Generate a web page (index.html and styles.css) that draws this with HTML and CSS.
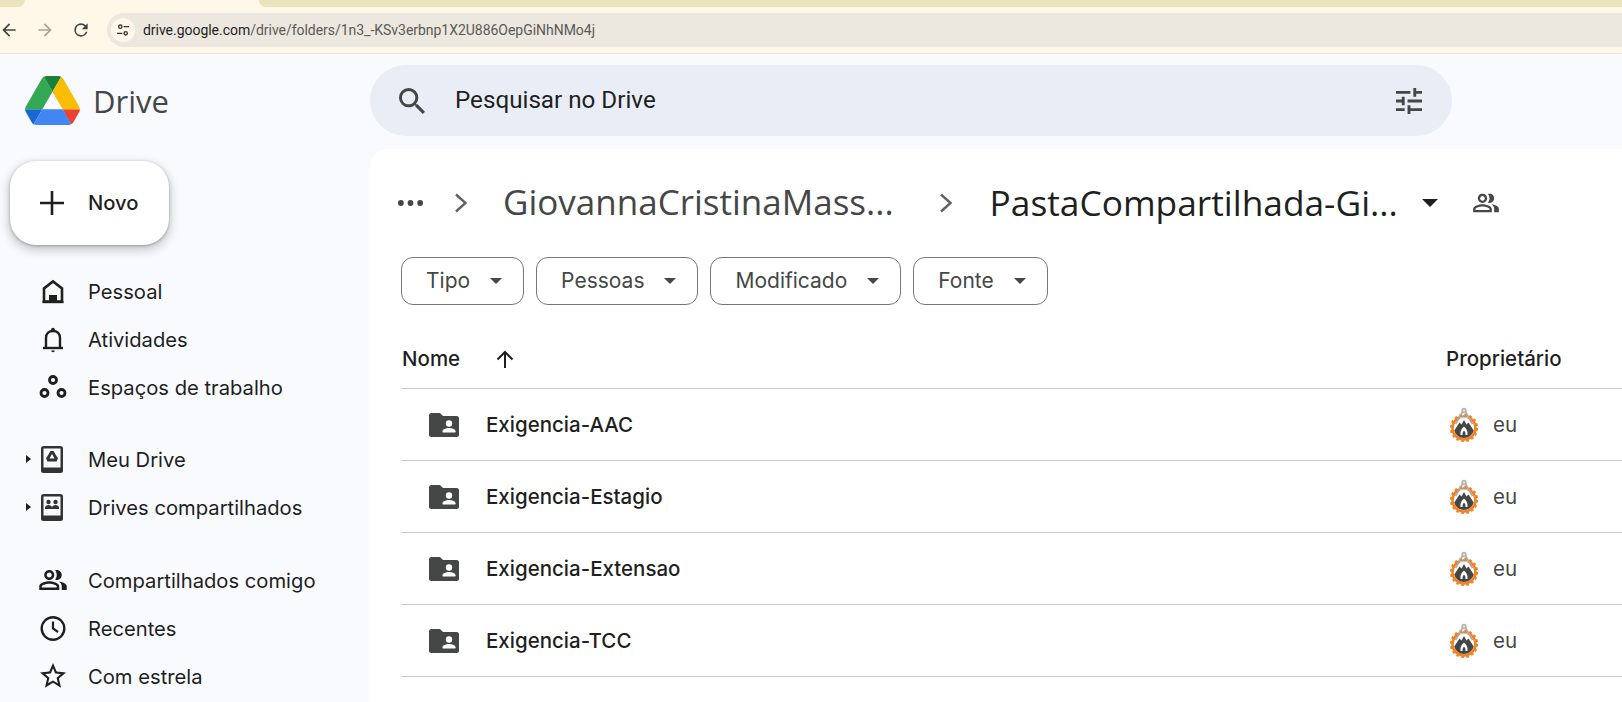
FILE: index.html
```html
<!DOCTYPE html>
<html lang="pt-BR">
<head>
<meta charset="utf-8">
<title>PastaCompartilhada - Google Drive</title>
<link rel="stylesheet" href="styles.css">
</head>
<body>
<svg class="defs" width="0" height="0" aria-hidden="true">
  <symbol id="people" viewBox="0 0 24 24">
    <path d="M16.67 13.13C18.04 14.06 19 15.32 19 17v3h4v-3c0-2.18-3.57-3.47-6.33-3.87zM15 12c2.21 0 4-1.79 4-4s-1.79-4-4-4c-.47 0-.91.1-1.33.24C14.5 5.27 15 6.58 15 8s-.5 2.73-1.33 3.76c.42.14.86.24 1.33.24zM9 12c2.21 0 4-1.79 4-4s-1.79-4-4-4-4 1.79-4 4 1.79 4 4 4zm0-6c1.1 0 2 .9 2 2s-.9 2-2 2-2-.9-2-2 .9-2 2-2zM9 13c-2.67 0-8 1.34-8 4v3h16v-3c0-2.66-5.33-4-8-4zm6 5H3v-.99C3.2 16.29 6.3 15 9 15s5.8 1.29 6 2v1z"/>
  </symbol>
  <symbol id="folder" viewBox="0 0 30 24">
    <path d="M2.5 0h8.5l3 3h13.5a2.500 2.500 0 0 1 2.500 2.500v16a2.500 2.500 0 0 1-2.500 2.500h-25a2.500 2.500 0 0 1-2.500-2.500v-19a2.500 2.500 0 0 1 2.500-2.500z" fill="#444746"/>
    <circle cx="20" cy="10.500" r="3.200" fill="#fff"/>
    <path d="M13.500 19.500v-1.300c0-2.200 4.300-3.300 6.500-3.300s6.500 1.100 6.500 3.300v1.300z" fill="#fff"/>
  </symbol>
  <symbol id="avatar" viewBox="0 0 28 35">
    <circle cx="14" cy="21" r="11.500" fill="none" stroke="#f5821f" stroke-width="2.600"/>
    <circle cx="14" cy="21" r="13" fill="none" stroke="#f5821f" stroke-width="2.500" stroke-dasharray="2.600 2.500"/>
    <circle cx="14" cy="21" r="10" fill="#fff"/>
    <path d="M4.300 23.500 9.500 15.500l2 2L14 13l2.500 4.500 2-2 5.200 8c-1 4-5 7.500-9.700 7.500s-8.700-3.500-9.700-7.500z" fill="#444746"/>
    <path d="M14 19.500c2.800 2.500 4 5 3.500 8.500h-7c-.5-3.500.7-6 3.500-8.500z" fill="#ffffff"/>
    <path d="M14 23.500c1.200 1.200 1.600 2.800 1.400 4.500h-2.800c-.2-1.700.2-3.300 1.400-4.500z" fill="#444746"/>
    <path d="M12.500 5 5.500 17M15.500 5l7 12" stroke="#a8a8a8" stroke-width="1.600" fill="none"/>
    <circle cx="14" cy="3.500" r="2.700" fill="#b5b5b5"/>
    <circle cx="14" cy="3.500" r="1" fill="#eee"/>
    <path d="M10 10.500h8" stroke="#c4c4c4" stroke-width="1.200"/>
  </symbol>
</svg>

<header class="chrome">
  <div class="tabstrip">
    <span class="tab-left"></span>
    <span class="tab-right"></span>
  </div>
  <div class="toolbar">
    <svg class="tb-icon" viewBox="0 0 24 24"><path d="M20 11H7.830l5.590-5.590L12 4l-8 8 8 8 1.410-1.410L7.830 13H20z"/></svg>
    <svg class="tb-icon tb-muted" viewBox="0 0 24 24"><path d="M4 11h12.170l-5.590-5.590L12 4l8 8-8 8-1.410-1.410L16.170 13H4z"/></svg>
    <svg class="tb-icon" viewBox="0 0 24 24"><path d="M17.650 6.350A7.960 7.960 0 0 0 12 4a8 8 0 1 0 7.730 10h-2.080A6 6 0 1 1 12 6c1.660 0 3.140.69 4.220 1.780L13 11h7V4z"/></svg>
    <div class="omnibox">
      <span class="site-btn">
        <svg viewBox="0 0 24 24" class="site-icon"><circle cx="8" cy="7" r="2.500" fill="none" stroke="#333" stroke-width="2"/><path d="M13 7h8M3 17h8" stroke="#333" stroke-width="2"/><circle cx="16" cy="17" r="2.500" fill="none" stroke="#333" stroke-width="2"/></svg>
      </span>
      <span class="url"><span class="url-host">drive.google.com</span>/drive/folders/1n3_-KSv3erbnp1X2U886OepGiNhNMo4j</span>
    </div>
  </div>
</header>

<div class="topbar">
  <div class="brand">
    <svg class="logo" viewBox="0 0 87.300 78">
      <path d="m6.600 66.850 3.850 6.650c.8 1.400 1.950 2.500 3.300 3.300l13.750-23.800h-27.500c0 1.550.4 3.100 1.200 4.500z" fill="#1967d2"/>
      <path d="m43.650 25-13.750-23.800c-1.350.8-2.500 1.900-3.300 3.300l-25.400 44a9.060 9.060 0 0 0 -1.200 4.500h27.500z" fill="#34a853"/>
      <path d="m73.550 76.800c1.350-.8 2.500-1.900 3.300-3.300l1.600-2.750 7.650-13.250c.8-1.400 1.200-2.950 1.200-4.500h-27.502l5.852 11.500z" fill="#ea4335"/>
      <path d="m43.650 25 13.750-23.800c-1.350-.8-2.900-1.200-4.500-1.200h-18.500c-1.600 0-3.150.45-4.500 1.200z" fill="#188038"/>
      <path d="m59.800 53h-32.300l-13.750 23.800c1.350.8 2.900 1.200 4.500 1.200h50.800c1.600 0 3.150-.45 4.500-1.200z" fill="#4285f4"/>
      <path d="m73.400 26.500-12.700-22c-.8-1.400-1.950-2.500-3.300-3.300l-13.750 23.800 16.150 28h27.450c0-1.550-.4-3.100-1.200-4.500z" fill="#fbbc04"/>
    </svg>
    <span class="brand-name">Drive</span>
  </div>
  <div class="search">
    <svg class="search-icon" viewBox="3 3 17.500 17.500"><path d="M15.500 14h-.79l-.28-.27A6.471 6.471 0 0 0 16 9.500 6.500 6.500 0 1 0 9.500 16c1.610 0 3.090-.59 4.230-1.570l.27.28v.79l5 4.990L20.490 19l-4.990-5zm-6 0C7.010 14 5 11.990 5 9.500S7.010 5 9.500 5 14 7.010 14 9.500 11.990 14 9.500 14z"/></svg>
    <span class="search-text">Pesquisar no Drive</span>
    <svg class="tune-icon" viewBox="3 3 18 18"><path d="M3 17v2h6v-2H3zM3 5v2h10V5H3zm10 16v-2h8v-2h-8v-2h-2v6h2zM7 9v2H3v2h4v2h2V9H7zm14 4v-2H11v2h10zm-6-4h2V7h4V5h-4V3h-2v6z"/></svg>
  </div>
</div>

<div class="layout">
  <aside class="sidebar">
    <button class="new-btn" type="button">
      <svg class="plus" viewBox="0 0 24 24"><path d="M12 0v24M0 12h24" stroke="#1f1f1f" stroke-width="2.600" fill="none"/></svg>
      <span class="new-label">Novo</span>
    </button>
    <nav class="nav">
      <ul class="nav-group">
        <li class="nav-item">
          <svg class="nav-icon" viewBox="0 0 30 30"><path d="M6 25.500V12.500L15 5.500l9 7v13z" fill="none" stroke="#1f1f1f" stroke-width="2.600"/><path d="M11 26v-7h8v7z" fill="#1f1f1f"/><path d="M4.500 26h21" stroke="#1f1f1f" stroke-width="2.400"/></svg>
          <span>Pessoal</span>
        </li>
        <li class="nav-item">
          <svg class="nav-icon" viewBox="0 0 30 30"><path d="M8 23.500V14c0-4.200 2.800-7 7-7s7 2.800 7 7v9.500" fill="none" stroke="#1f1f1f" stroke-width="2.400"/><path d="M5 24h20" stroke="#1f1f1f" stroke-width="2.400"/><circle cx="15" cy="5.500" r="1.800" fill="#1f1f1f"/><path d="M13.200 26.500h3.600a1.800 1.800 0 0 1-3.600 0z" fill="#1f1f1f"/></svg>
          <span>Atividades</span>
        </li>
        <li class="nav-item">
          <svg class="nav-icon" viewBox="0 0 30 30"><circle cx="15" cy="8" r="3.500" fill="none" stroke="#1f1f1f" stroke-width="2.800"/><circle cx="6.500" cy="21" r="3.500" fill="none" stroke="#1f1f1f" stroke-width="2.800"/><circle cx="23.500" cy="21" r="3.500" fill="none" stroke="#1f1f1f" stroke-width="2.800"/></svg>
          <span>Espaços de trabalho</span>
        </li>
      </ul>
      <ul class="nav-group nav-group-drives">
        <li class="nav-item">
          <span class="nav-arrow"></span>
          <svg class="nav-icon" viewBox="1 0 30 30"><path d="M4 4.500A2.500 2.500 0 0 1 6.500 2h17A2.500 2.500 0 0 1 26 4.500v22a2.500 2.500 0 0 1-2.500 2.500h-17A2.500 2.500 0 0 1 4 26.500z" fill="#333"/><rect x="6.500" y="4.500" width="17" height="19" fill="#f8fafd"/><path d="M13.500 7h3l4.500 7.500-1.500 3h-9L9 14.500z" fill="#333"/><path d="M12.500 14.500h5L15 10z" fill="#f8fafd"/></svg>
          <span>Meu Drive</span>
        </li>
        <li class="nav-item">
          <span class="nav-arrow"></span>
          <svg class="nav-icon" viewBox="1 0 30 30"><path d="M4 4.500A2.500 2.500 0 0 1 6.500 2h17A2.500 2.500 0 0 1 26 4.500v22a2.500 2.500 0 0 1-2.500 2.500h-17A2.500 2.500 0 0 1 4 26.500z" fill="#333"/><rect x="6.500" y="4.500" width="17" height="19" fill="#f8fafd"/><circle cx="11.500" cy="10" r="2.200" fill="#333"/><circle cx="18.500" cy="10" r="2.200" fill="#333"/><path d="M8 17v-1.500c0-1.500 2-2.500 3.500-2.500s3.500 1 3.500 2.500c0-1.500 2-2.500 3.500-2.500s3.500 1 3.500 2.500V17z" fill="#333"/></svg>
          <span>Drives compartilhados</span>
        </li>
      </ul>
      <ul class="nav-group">
        <li class="nav-item">
          <svg class="nav-icon nav-icon-wide" viewBox="0 0 24 24"><use href="#people"/></svg>
          <span>Compartilhados comigo</span>
        </li>
        <li class="nav-item">
          <svg class="nav-icon" viewBox="0 0 30 30"><circle cx="15" cy="15.500" r="11.300" fill="none" stroke="#1f1f1f" stroke-width="2.400"/><path d="M15 8.500V15.500l5 3.500" fill="none" stroke="#1f1f1f" stroke-width="2.200"/></svg>
          <span>Recentes</span>
        </li>
        <li class="nav-item">
          <svg class="nav-icon nav-icon-star" viewBox="2 2 20 20"><path d="M22 9.240l-7.190-.62L12 2 9.190 8.630 2 9.240l5.460 4.730L5.820 21 12 17.270 18.180 21l-1.630-7.030L22 9.240zM12 15.400l-3.760 2.270 1-4.280-3.320-2.880 4.380-.38L12 6.100l1.710 4.040 4.380.38-3.320 2.880 1 4.280L12 15.400z"/></svg>
          <span>Com estrela</span>
        </li>
      </ul>
    </nav>
  </aside>

  <main class="main">
    <div class="crumbs">
      <svg class="crumb-dots" viewBox="0 0 26 6"><circle cx="3" cy="3" r="3"/><circle cx="13" cy="3" r="3"/><circle cx="23" cy="3" r="3"/></svg>
      <svg class="crumb-chev crumb-chev-first" viewBox="0 0 14 20"><path d="M2 1.500 11.500 10 2 18.500" fill="none" stroke="#5f6368" stroke-width="2.400"/></svg>
      <span class="crumb crumb-parent">GiovannaCristinaMass...</span>
      <svg class="crumb-chev" viewBox="0 0 14 20"><path d="M2 1.500 11.500 10 2 18.500" fill="none" stroke="#5f6368" stroke-width="2.400"/></svg>
      <span class="crumb crumb-current">PastaCompartilhada-Gi...</span>
      <span class="crumb-caret"></span>
      <svg class="crumb-people" viewBox="0 0 24 24"><use href="#people"/></svg>
    </div>

    <div class="chips">
      <button class="chip" type="button">Tipo<span class="caret"></span></button>
      <button class="chip" type="button">Pessoas<span class="caret"></span></button>
      <button class="chip" type="button">Modificado<span class="caret"></span></button>
      <button class="chip" type="button">Fonte<span class="caret"></span></button>
    </div>

    <div class="row row-head">
      <div class="col-name">Nome
        <svg class="sort" viewBox="0 0 18 18"><path d="M9 18V2M1.500 9.500 9 2l7.500 7.500" fill="none" stroke="#1f1f1f" stroke-width="2"/></svg>
      </div>
      <div class="col-owner">Proprietário</div>
    </div>

    <div class="row">
      <div class="col-file"><svg class="folder"><use href="#folder"/></svg>Exigencia-AAC</div>
      <div class="col-user"><svg class="avatar"><use href="#avatar"/></svg>eu</div>
    </div>
    <div class="row">
      <div class="col-file"><svg class="folder"><use href="#folder"/></svg>Exigencia-Estagio</div>
      <div class="col-user"><svg class="avatar"><use href="#avatar"/></svg>eu</div>
    </div>
    <div class="row">
      <div class="col-file"><svg class="folder"><use href="#folder"/></svg>Exigencia-Extensao</div>
      <div class="col-user"><svg class="avatar"><use href="#avatar"/></svg>eu</div>
    </div>
    <div class="row">
      <div class="col-file"><svg class="folder"><use href="#folder"/></svg>Exigencia-TCC</div>
      <div class="col-user"><svg class="avatar"><use href="#avatar"/></svg>eu</div>
    </div>
  </main>
</div>
</body>
</html>
```
FILE: styles.css
```css
* { box-sizing: border-box; }
html, body { height: 100%; }
body {
  margin: 0;
  background: #f8fafd;
  color: #1f1f1f;
  font-family: Inter, Roboto, "Liberation Sans", sans-serif;
  overflow: hidden;
  display: flex;
  flex-direction: column;
}
.defs { position: absolute; }
ul { list-style: none; margin: 0; padding: 0; }
button { font: inherit; color: inherit; }

/* Browser chrome */
.chrome {
  height: 54px;
  flex: none;
  background: #fff8e8;
  border-bottom: 1px solid #f0e6d2;
}
.tabstrip {
  height: 7px;
  display: flex;
  justify-content: space-between;
}
.tab-left {
  width: 25px;
  background: #ebe3bc;
  border-bottom-right-radius: 8px;
}
.tab-right {
  width: calc(100% - 259px);
  background: #ebe3bc;
  border-bottom-left-radius: 8px;
}
.toolbar {
  display: flex;
  align-items: center;
  height: 34px;
  margin: 6px 0 0 -1px;
}
.tb-icon {
  width: 20px;
  height: 20px;
  flex: none;
  margin-right: 16px;
  fill: #444;
}
.tb-muted { fill: #a8a49a; }
.omnibox {
  flex: 1;
  height: 34px;
  background: #ece7df;
  border-radius: 17px 0 0 17px;
  display: flex;
  align-items: center;
  padding-left: 4px;
}
.site-btn {
  width: 24px;
  height: 24px;
  border-radius: 50%;
  background: #fff8e8;
  display: flex;
  align-items: center;
  justify-content: center;
}
.site-icon { width: 16px; height: 16px; }
.url {
  margin-left: 8px;
  font-family: Roboto, sans-serif;
  font-size: 14px;
  letter-spacing: -0.03px;
  color: #5b5b55;
  white-space: nowrap;
}
.url-host { color: #1f1f1f; }

/* Top bar */
.topbar {
  height: 95px;
  flex: none;
  display: flex;
  align-items: flex-start;
}
.brand {
  width: 370px;
  flex: none;
  display: flex;
  align-items: center;
  padding: 22px 0 0 25px;
}
.logo { width: 55px; height: 49px; }
.brand-name {
  margin-left: 13px;
  font-family: "Open Sans", sans-serif;
  font-size: 31px;
  color: #444746;
}
.search {
  width: 1082px;
  height: 71px;
  margin-top: 11px;
  border-radius: 36px;
  background: #e9eef6;
  display: flex;
  align-items: center;
  padding: 0 29px;
}
.search-icon { width: 26px; height: 26px; fill: #444746; flex: none; }
.search-text {
  margin-left: 30px;
  padding-bottom: 2px;
  font-family: Roboto, sans-serif;
  font-size: 24.200px;
  flex: 1;
}
.tune-icon { width: 28px; height: 26px; fill: #444746; flex: none; }

/* Layout */
.layout { flex: 1; display: flex; min-height: 0; }
.sidebar { width: 370px; flex: none; padding-top: 12px; }
.new-btn {
  width: 159px;
  height: 84px;
  margin-left: 10px;
  border: 0;
  border-radius: 26px;
  background: #fff;
  box-shadow: 0 1px 3px rgba(0,0,0,.3), 0 4px 8px 3px rgba(0,0,0,.15);
  display: flex;
  align-items: center;
  padding: 0 0 0 30px;
  font-size: 20.200px;
  font-weight: 500;
}
.new-label { padding-bottom: 2px; }
.plus { width: 24px; height: 24px; margin-right: 24px; }
.nav { margin-top: 22px; }
.nav-group { margin-bottom: 24px; }
.nav-group-drives { margin-bottom: 25px; }
.nav-item {
  position: relative;
  height: 48px;
  display: flex;
  align-items: center;
  padding-left: 38px;
  font-size: 20.200px;
  color: #1f1f1f;
  white-space: nowrap;
}
.nav-icon {
  width: 30px;
  height: 30px;
  flex: none;
  margin-right: 20px;
  fill: #1f1f1f;
}
.nav-icon-star { width: 26px; height: 26px; margin: 0 22px 0 2px; }
.nav-arrow {
  position: absolute;
  left: 26px;
  top: 20px;
  border-left: 5px solid #1f1f1f;
  border-top: 4px solid transparent;
  border-bottom: 4px solid transparent;
}

/* Main panel */
.main {
  flex: 1;
  min-width: 0;
  background: #fff;
  border-top-left-radius: 18px;
  padding: 24px 0 0 31px;
  overflow: hidden;
}
.crumbs {
  height: 60px;
  display: flex;
  align-items: center;
  white-space: nowrap;
}
.crumb-dots { width: 25px; height: 6px; fill: #444746; margin-left: -3px; flex: none; }
.crumb-chev { width: 14px; height: 20px; flex: none; margin-left: 45px; }
.crumb-chev-first { margin-left: 31px; }
.crumb {
  font-family: "Open Sans", sans-serif;
  font-size: 35px;
  padding-bottom: 3px;
}
.crumb-parent { color: #444746; margin-left: 35px; }
.crumb-current { color: #1f1f1f; font-size: 35.300px; margin-left: 37px; }
.crumb-caret {
  margin-left: 24px;
  border-top: 8px solid #1f1f1f;
  border-left: 8px solid transparent;
  border-right: 8px solid transparent;
}
.crumb-people { width: 28px; height: 28px; fill: #444746; margin-left: 34px; flex: none; }

.chips { display: flex; gap: 12px; margin-top: 24px; }
.chip {
  height: 48px;
  display: flex;
  align-items: center;
  padding: 0 21px 0 24px;
  border: 1px solid #747775;
  border-radius: 12px;
  background: #fff;
  font-size: 21px;
  line-height: 24px;
  color: #444746;
  white-space: nowrap;
}
.caret {
  margin-left: 20px;
  border-top: 6px solid #444746;
  border-left: 6px solid transparent;
  border-right: 6px solid transparent;
}

.row {
  display: grid;
  grid-template-columns: 1045px 1fr;
  height: 72px;
  align-items: center;
  border-bottom: 1px solid #c7c7c7;
  font-size: 20.500px;
}
.row-head {
  height: 60px;
  margin-top: 24px;
  font-weight: 500;
}
.col-name { display: flex; align-items: center; padding-left: 1px; }
.sort { width: 18px; height: 18px; margin-left: 36px; }
.col-owner { white-space: nowrap; }
.col-file {
  display: flex;
  align-items: center;
  padding-left: 28px;
  font-weight: 500;
  white-space: nowrap;
}
.folder { width: 30px; height: 24px; margin-right: 27px; flex: none; }
.col-user {
  display: flex;
  align-items: center;
  padding-left: 4px;
  color: #444746;
}
.avatar { width: 28px; height: 35px; margin-right: 15px; flex: none; }
```
